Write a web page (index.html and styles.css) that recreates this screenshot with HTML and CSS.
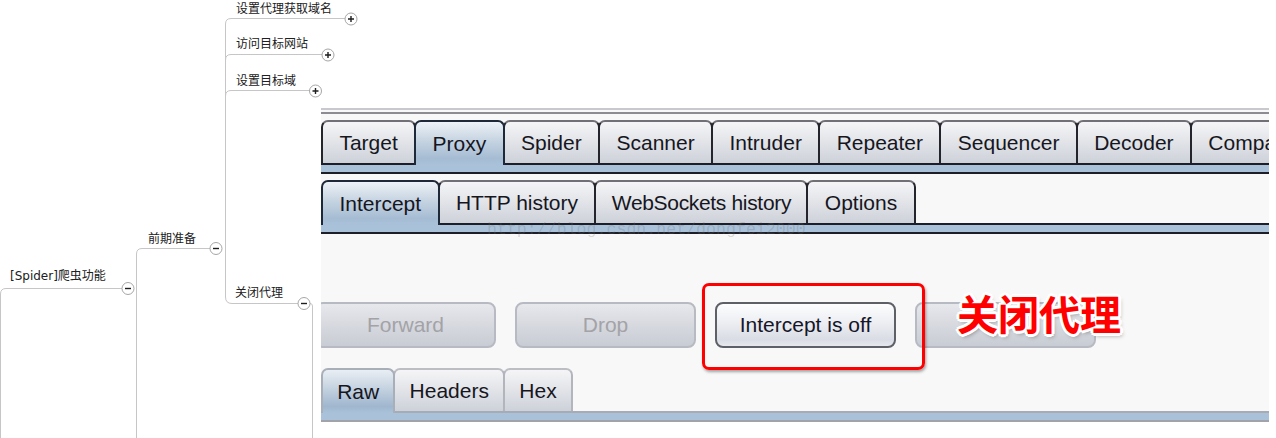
FILE: index.html
```html
<!DOCTYPE html>
<html lang="zh">
<head>
<meta charset="utf-8">
<title>Spider 爬虫功能</title>
<link rel="stylesheet" href="styles.css">
</head>
<body>
<div class="canvas">
  <svg class="map" width="1276" height="438" viewBox="0 0 1276 438">
    <g fill="none" stroke="#c6c6c6" stroke-width="1">
      <path d="M0.5 438 V294 Q0.5 288.5 6 288.5 H122"/>
      <path d="M136.5 438 V254 Q136.5 248.5 142 248.5 H210"/>
      <path d="M345 18.5 H231 Q225.5 18.5 225.5 24 V297 Q225.5 303.5 232 303.5 H298"/>
      <path d="M225.5 60 Q225.5 54.5 231 54.5 H322"/>
      <path d="M225.5 96 Q225.5 90.5 231 90.5 H309.5"/>
      <path d="M310 303.5 Q312.5 303.5 312.5 306 V438"/>
    </g>
    <g fill="#fff" stroke="#a6a6a6" stroke-width="1">
      <circle cx="351" cy="19" r="6"/>
      <circle cx="328" cy="55" r="6"/>
      <circle cx="315.5" cy="91" r="6"/>
      <circle cx="216" cy="248.5" r="6"/>
      <circle cx="128" cy="288.5" r="6"/>
      <circle cx="304" cy="303.5" r="6"/>
    </g>
    <g fill="none" stroke="#1e1e1e" stroke-width="1.4">
      <path d="M348 19 H354 M351 16 V22"/>
      <path d="M325 55 H331 M328 52 V58"/>
      <path d="M312.5 91 H318.5 M315.5 88 V94"/>
      <path d="M213 248.5 H219"/>
      <path d="M125 288.5 H131"/>
      <path d="M301 303.5 H307"/>
    </g>
  </svg>

  <div class="node node-domain">设置代理获取域名</div>
  <div class="node node-visit">访问目标网站</div>
  <div class="node node-scope">设置目标域</div>
  <div class="node node-prep">前期准备</div>
  <div class="node node-spider">[Spider]爬虫功能</div>
  <div class="node node-off">关闭代理</div>

  <div class="burp">
    <div class="burp-top"><div class="burp-rule"></div></div>

    <div class="tabs">
      <div class="tab">Target</div>
      <div class="tab sel">Proxy</div>
      <div class="tab">Spider</div>
      <div class="tab">Scanner</div>
      <div class="tab">Intruder</div>
      <div class="tab">Repeater</div>
      <div class="tab">Sequencer</div>
      <div class="tab">Decoder</div>
      <div class="tab">Comparer</div>
      <div class="tab">Extender</div>
    </div>
    <div class="band"></div>

    <div class="tabs sub">
      <div class="tab sel">Intercept</div>
      <div class="tab">HTTP history</div>
      <div class="tab tight">WebSockets history</div>
      <div class="tab">Options</div>
    </div>
    <div class="band"></div>

    <div class="actions">
      <div class="btn off">Forward</div>
      <div class="btn off">Drop</div>
      <div class="btn on">Intercept is off</div>
      <div class="btn off"></div>
    </div>

    <div class="tabs light">
      <div class="tab sel">Raw</div>
      <div class="tab">Headers</div>
      <div class="tab">Hex</div>
    </div>
    <div class="band band-light"></div>
  </div>

  <div class="watermark">http://blog.csdn.net/dongfei2000</div>
  <div class="callout-box"></div>
  <div class="callout-text">关闭代理</div>
</div>
</body>
</html>
```

FILE: styles.css
```css
* { box-sizing: border-box; }

html, body {
  margin: 0;
  padding: 0;
  background: #ffffff;
}

.canvas {
  position: relative;
  width: 1276px;
  height: 438px;
  overflow: hidden;
  font-family: "Liberation Sans", Arial, sans-serif;
}

.map {
  position: absolute;
  left: 0;
  top: 0;
}

.node {
  position: absolute;
  font-family: "Noto Sans CJK SC", "Liberation Sans", sans-serif;
  font-size: 12px;
  line-height: 14px;
  color: #202020;
  white-space: nowrap;
}
.node-domain { left: 236px; top: 1px; }
.node-visit  { left: 236px; top: 36px; }
.node-scope  { left: 236px; top: 73px; }
.node-prep   { left: 148px; top: 231px; }
.node-spider { left: 10px;  top: 269px; font-family: "DejaVu Sans", "Noto Sans CJK SC", sans-serif; }
.node-off    { left: 235px; top: 285px; }

/* ---------- Burp window ---------- */
.burp {
  position: absolute;
  left: 321px;
  top: 108px;
  width: 948px;
  overflow: hidden;
  background: #f8f8f8;
}

.burp-top {
  border-top: 2px solid #c9c9cd;
  padding-top: 2px;
  padding-bottom: 6px;
}
.burp-rule {
  height: 2px;
  background: #8c8c92;
}

.tabs {
  display: flex;
  height: 43px;
}

.tab {
  flex: none;
  display: flex;
  align-items: center;
  padding: 1px 16.4px 0;
  margin-left: -2px;
  border: 2px solid #24242c;
  border-top-color: #707076;
  border-bottom: 0;
  border-radius: 7px 7px 0 0;
  background: linear-gradient(#f5f5f7 0%, #e3e5e9 45%, #cdd1d9 100%);
  font-size: 21px;
  color: #16161e;
  white-space: nowrap;
}
.tab:first-child { margin-left: 0; }
.tab.tight { letter-spacing: -0.33px; padding: 1px 15.4px 0; }

.tab.sel {
  position: relative;
  z-index: 1;
  margin-bottom: -2px;
  border-color: #1d2838;
  background: linear-gradient(#edf2f7 0%, #c9d6e3 40%, #a5bcd3 85%, #a9c2da 100%);
}

.band {
  height: 11px;
  border-top: 2px solid #1e1e28;
  border-bottom: 2px solid #1e1e28;
  background: #a9c2da;
}

.tabs.sub { margin-top: 6px; }

.tabs.light .tab {
  padding: 1px 14.2px 0;
  border-color: #b2b5bc;
  border-top-color: #bcbec4;
}
.tabs.light .tab.sel {
  border-color: #a9afb9;
  background: linear-gradient(#e9eef4 0%, #c3d1df 45%, #9fb6ce 85%, #a9c2da 100%);
}
.band-light {
  border-top-color: #a7abb3;
  border-bottom-color: #a2a2aa;
}

.actions {
  display: flex;
  gap: 19px;
  margin: 68px 0 20px -6px;
}

.btn {
  flex: none;
  width: 181px;
  height: 46px;
  display: flex;
  align-items: center;
  justify-content: center;
  border-radius: 8px;
  font-size: 21px;
  white-space: nowrap;
}
.btn.off {
  border: 2px solid #b7bac2;
  background: linear-gradient(#e7e8ec 0%, #d7d9df 50%, #c8ccd4 100%);
  color: #a3a3a7;
}
.btn.on {
  border: 2px solid #5e6068;
  background: linear-gradient(#fdfdfe 0%, #eceef2 45%, #d9dce4 85%, #e6e8ee 100%);
  color: #161628;
}

/* ---------- overlays ---------- */
.watermark {
  position: absolute;
  left: 487px;
  top: 221px;
  font-family: "Liberation Mono", "Courier New", monospace;
  font-size: 16.6px;
  line-height: 18px;
  color: rgba(110, 110, 110, 0.24);
  white-space: nowrap;
}

.callout-box {
  position: absolute;
  left: 702px;
  top: 283px;
  width: 223px;
  height: 87px;
  border: 3px solid #ff0000;
  border-radius: 7px;
  box-shadow: 1px 2px 3px rgba(0, 0, 0, 0.35);
}

.callout-text {
  position: absolute;
  left: 957px;
  top: 286px;
  font-family: "Noto Sans CJK SC", sans-serif;
  font-size: 41px;
  font-weight: 700;
  line-height: 52px;
  color: #ff0000;
  white-space: nowrap;
  text-shadow:
    2px 0 0 #fff, -2px 0 0 #fff, 0 2px 0 #fff, 0 -2px 0 #fff,
    2px 2px 0 #fff, -2px -2px 0 #fff, 2px -2px 0 #fff, -2px 2px 0 #fff,
    3px 0 0 #fff, -3px 0 0 #fff, 0 3px 0 #fff, 0 -3px 0 #fff,
    2px 3px 4px rgba(0, 0, 0, 0.35);
}
```
